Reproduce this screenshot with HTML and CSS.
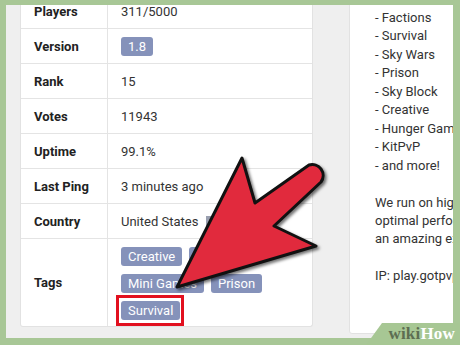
FILE: index.html
```html
<!DOCTYPE html>
<html>
<head>
<meta charset="utf-8">
<link rel="stylesheet" href="styles.css">
</head>
<body>
<div class="frame">
  <div class="stage">
    <div class="cols">
      <div class="card table-card">
        <div class="row"><div class="label">Players</div><div class="value">311/5000</div></div>
        <div class="row"><div class="label">Version</div><div class="value"><span class="tag">1.8</span></div></div>
        <div class="row"><div class="label">Rank</div><div class="value">15</div></div>
        <div class="row"><div class="label">Votes</div><div class="value">11943</div></div>
        <div class="row"><div class="label">Uptime</div><div class="value">99.1%</div></div>
        <div class="row"><div class="label">Last Ping</div><div class="value">3 minutes ago</div></div>
        <div class="row"><div class="label">Country</div><div class="value">United States <span class="flag"></span></div></div>
        <div class="row tags-row"><div class="label">Tags</div><div class="value tags"><span class="tag">Creative</span><span class="tag">Factions</span><span class="tag">Mini Games</span><span class="tag">Prison</span><span class="tag marked">Survival</span></div></div>
      </div>
      <div class="card info-card">
        <div class="line">- Factions</div>
        <div class="line">- Survival</div>
        <div class="line">- Sky Wars</div>
        <div class="line">- Prison</div>
        <div class="line">- Sky Block</div>
        <div class="line">- Creative</div>
        <div class="line">- Hunger Games</div>
        <div class="line">- KitPvP</div>
        <div class="line">- and more!</div>
        <div class="line">&nbsp;</div>
        <div class="line">We run on high-end hardware for</div>
        <div class="line">optimal performance, giving you</div>
        <div class="line">an amazing experience!</div>
        <div class="line">&nbsp;</div>
        <div class="line">IP: play.gotpvp.com</div>
      </div>
    </div>
  </div>
  <svg class="arrow" width="460" height="345" viewBox="0 0 460 345">
    <path d="M177,287 L242,158 L255,203 L309,165 A11 11 0 0 1 321,182 L274,226 L316,246 Z" fill="#e12a3d" stroke="#111" stroke-width="3" stroke-linejoin="round"/>
  </svg>
  <div class="watermark"></div>
  <div class="wm-text"><span class="wiki">wiki</span><span class="how">How</span></div>
</div>
</body>
</html>
```
FILE: styles.css
```css
html, body {
  margin: 0;
  padding: 0;
}
body {
  width: 460px;
  height: 345px;
  overflow: hidden;
  font-family: Roboto, "Liberation Sans", sans-serif;
}
.frame {
  position: relative;
  width: 460px;
  height: 345px;
  box-sizing: border-box;
  padding: 5px 7px 7px 6px;
  background: #a8c796;
}
.stage {
  height: 333px;
  background: #efefef;
  overflow: hidden;
}
.cols {
  display: flex;
  align-items: flex-start;
  gap: 36px;
  padding-left: 14px;
  margin-top: -11px;
}
.card {
  background: #fff;
  border: 1px solid #e2e2e2;
  border-radius: 3px;
  box-sizing: border-box;
  flex-shrink: 0;
}
.table-card {
  width: 293px;
  border-top: none;
}
.row {
  display: flex;
  height: 35px;
  border-bottom: 1px solid #e4e4e4;
  box-sizing: border-box;
}
.row:last-child {
  border-bottom: none;
}
.label {
  width: 87px;
  flex-shrink: 0;
  border-right: 1px solid #e4e4e4;
  padding-left: 13px;
  box-sizing: border-box;
  display: flex;
  align-items: center;
  font-weight: bold;
  font-size: 13px;
  color: #222;
}
.value {
  padding-left: 13px;
  display: flex;
  align-items: center;
  font-size: 13px;
  color: #333;
}
.tags-row {
  height: 87px;
}
.value.tags {
  display: flex;
  flex-wrap: wrap;
  align-content: flex-start;
  gap: 8px 7px;
  padding-top: 8px;
  padding-right: 12px;
  box-sizing: border-box;
  flex: 1;
}
.tag {
  display: inline-block;
  height: 19px;
  line-height: 19px;
  padding: 0 7px;
  background: #8592ba;
  color: #fff;
  border-radius: 3px;
  font-size: 13px;
}
.tag.marked {
  position: relative;
}
.tag.marked::after {
  content: "";
  position: absolute;
  top: -6px;
  bottom: -6px;
  left: -5px;
  right: -4px;
  border: 3px solid #e2101f;
}
.flag {
  display: inline-block;
  width: 14px;
  height: 10px;
  margin-left: 8px;
  background: #9aa0b0;
}
.info-card {
  width: 150px;
  padding: 14px 0 47px 25px;
  font-size: 13px;
  color: #333;
  line-height: 18.45px;
}
.line {
  white-space: nowrap;
}
.arrow {
  position: absolute;
  left: 0;
  top: 0;
  filter: drop-shadow(2px 2px 1.5px rgba(0,0,0,0.55));
}
.watermark {
  position: absolute;
  right: 0;
  bottom: 0;
  width: 94px;
  height: 22px;
  background: #a7c794;
  clip-path: polygon(16px 0, 100% 0, 100% 100%, 0 100%);
}
.wm-text {
  position: absolute;
  right: 5px;
  bottom: 1px;
  font-family: "Liberation Serif", "DejaVu Serif", serif;
  font-weight: bold;
  font-size: 17px;
  line-height: 20px;
  letter-spacing: 0.2px;
}
.wiki {
  color: #5d6e52;
}
.how {
  color: #fff;
}
```
